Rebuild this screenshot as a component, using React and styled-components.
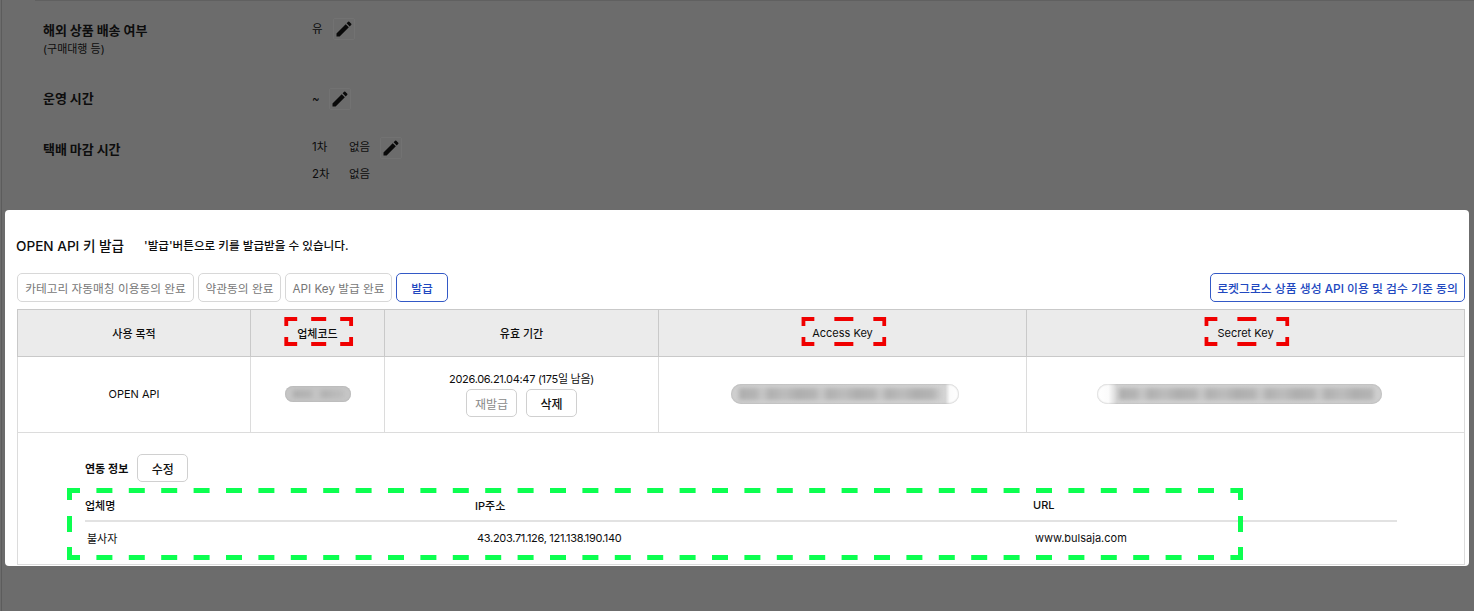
import React from "react";
import styled, { createGlobalStyle } from "styled-components";
import { MdEdit } from "react-icons/md";

const GlobalStyle = createGlobalStyle`
    html, body {
        margin: 0;
        padding: 0;
        background: #6c6c6c;
    }
    * {
        box-sizing: border-box;
    }
`

const RedDash = ({ width, mid }) => {
    const midStart = (width - mid) / 2
    return (
        <RedSvg width={width} height={29} viewBox={`0 0 ${width} 29`} fill="none" stroke="#f00000" strokeWidth="4">
            <path d={`M2 9V2H13M${midStart} 2H${midStart + mid}M${width - 13} 2H${width - 2}V9`} />
            <path d={`M2 20V27H13M${midStart} 27H${midStart + mid}M${width - 13} 27H${width - 2}V20`} />
        </RedSvg>
    )
}

const GreenDash = () => (
    <GreenSvg width={1176} height={72} viewBox="0 0 1176 72" fill="none" stroke="#0cff50" strokeWidth="5">
        <path d="M0 2.5H1176" strokeDasharray="16 16.4" strokeDashoffset="3" />
        <path d="M0 69.5H1176" strokeDasharray="16 16.4" strokeDashoffset="3" />
        <path d="M2.5 0V12M2.5 28V44M2.5 59V72" />
        <path d="M1173.5 0V12M1173.5 28V44M1173.5 59V72" />
    </GreenSvg>
)

const App = () => {
    return (
        <Page>
            <GlobalStyle />
            <Settings>
                <Row $height={69}>
                    <Label>
                        <LabelMain>해외 상품 배송 여부</LabelMain>
                        <LabelSub>(구매대행 등)</LabelSub>
                    </Label>
                    <Values>
                        <ValueLine $lift={1}>
                            유
                            <EditButton $drop={1}><MdEdit /></EditButton>
                        </ValueLine>
                    </Values>
                </Row>
                <Row $height={50}>
                    <Label $lift={1}>
                        <LabelMain>운영 시간</LabelMain>
                    </Label>
                    <Values $drop={1}>
                        <ValueLine>
                            ~
                            <EditButton $gap={9}><MdEdit /></EditButton>
                        </ValueLine>
                    </Values>
                </Row>
                <Row $height={74}>
                    <Label>
                        <LabelMain>택배 마감 시간</LabelMain>
                    </Label>
                    <Values>
                        <ValueLine $lift={2}>
                            <Round>1차</Round>
                            없음
                            <EditButton $drop={2}><MdEdit /></EditButton>
                        </ValueLine>
                        <ValueLine>
                            <Round>2차</Round>
                            없음
                        </ValueLine>
                    </Values>
                </Row>
            </Settings>

            <Panel>
                <TitleRow>
                    <Title>OPEN API 키 발급</Title>
                    <Guide>'발급'버튼으로 키를 발급받을 수 있습니다.</Guide>
                </TitleRow>

                <Toolbar>
                    <Button $width={177}>카테고리 자동매칭 이용동의 완료</Button>
                    <Button $width={83}>약관동의 완료</Button>
                    <Button $width={107}>API Key 발급 완료</Button>
                    <Button $primary $width={52}>발급</Button>
                    <RightButton $primary $width={255}>로켓그로스 상품 생성 API 이용 및 검수 기준 동의</RightButton>
                </Toolbar>

                <KeyTable>
                    <HeadCell>사용 목적</HeadCell>
                    <HeadCell>업체코드<RedDash width={69} mid={15} /></HeadCell>
                    <HeadCell>유효 기간</HeadCell>
                    <HeadCell $latin>Access Key<RedDash width={85} mid={19} /></HeadCell>
                    <HeadCell $latin $last>Secret Key<RedDash width={85} mid={19} /></HeadCell>

                    <Cell $lift>OPEN API</Cell>
                    <Cell><Masked $width={66} $height={16} /></Cell>
                    <Cell>
                        <Expiry>
                            <Digits>2026.06.21.04:47 (175일 남음)</Digits>
                            <ExpiryButtons>
                                <SmallButton $muted>재발급</SmallButton>
                                <SmallButton>삭제</SmallButton>
                            </ExpiryButtons>
                        </Expiry>
                    </Cell>
                    <Cell><Masked $width={228} $height={20} $fade="right" $nudge={5} /></Cell>
                    <Cell $last><Masked $width={285} $height={20} $fade="left" $nudge={-13} /></Cell>

                    <Detail>
                        <DetailHead>
                            연동 정보
                            <SmallButton>수정</SmallButton>
                        </DetailHead>
                        <InfoHead>
                            <span>업체명</span>
                            <span>IP주소</span>
                            <span>URL</span>
                        </InfoHead>
                        <InfoRow>
                            <span>불사자</span>
                            <Digits>43.203.71.126, 121.138.190.140</Digits>
                            <span>www.bulsaja.com</span>
                        </InfoRow>
                        <GreenDash />
                    </Detail>
                </KeyTable>
            </Panel>
        </Page>
    );
}

const Page = styled.div`
    position: relative;
    width: 1474px;
    height: 611px;
    overflow: hidden;
    background: #6c6c6c;
    color: #0d0d0d;
    font-family: Inter, "Noto Sans CJK KR", sans-serif;
    font-size: 12px;

    &::before {
        content: "";
        position: absolute;
        top: 0;
        bottom: 0;
        left: 1px;
        width: 1px;
        background: #5c5c5c;
    }
`

const Settings = styled.section`
    position: relative;
    height: 210px;
    padding: 18px 0 0 43px;

    &::before {
        content: "";
        position: absolute;
        top: 0;
        left: 35px;
        right: 0;
        height: 1px;
        background: #606060;
    }
`

const Row = styled.div`
    display: grid;
    grid-template-columns: 269px auto;
    height: ${props => props.$height}px;
`

const Label = styled.div`
    display: flex;
    flex-direction: column;
    margin-top: ${props => props.$lift ? -props.$lift : 0}px;
`

const LabelMain = styled.span`
    font-size: 13px;
    font-weight: 700;
    line-height: 24px;
    letter-spacing: -0.05px;
`

const LabelSub = styled.span`
    font-size: 11px;
    line-height: 13px;
    margin-top: 1px;
`

const Values = styled.div`
    display: flex;
    flex-direction: column;
    gap: 5px;
    margin-top: ${props => props.$drop || 0}px;
`

const ValueLine = styled.div`
    display: flex;
    align-items: center;
    height: 22px;
    margin-top: ${props => props.$lift ? -props.$lift : 0}px;
    font-size: 11.5px;
`

const Round = styled.span`
    width: 37px;
`

const EditButton = styled.span`
    display: inline-flex;
    align-items: center;
    justify-content: center;
    width: 22px;
    height: 22px;
    margin-left: ${props => props.$gap || 10}px;
    margin-top: ${props => (props.$drop || 0) * 2}px;
    border: 1px solid #727272;
    border-radius: 2px;
    font-size: 20px;
    color: #0a0a0a;
`

const Panel = styled.section`
    width: 1464px;
    height: 356px;
    margin-left: 5px;
    padding: 0 4px 0 12px;
    background: #fff;
    border-radius: 4px;
`

const TitleRow = styled.div`
    display: flex;
    align-items: center;
    height: 63px;
    padding-top: 7px;
`

const Title = styled.h2`
    margin: 0 0 0 -1px;
    width: 128px;
    font-size: 13.6px;
    font-weight: 500;
`

const Guide = styled.p`
    margin: 0;
    font-size: 11.6px;
    font-weight: 500;
`

const Toolbar = styled.div`
    display: flex;
    gap: 4px;
    height: 29px;
`

const Button = styled.button`
    height: 29px;
    width: ${props => props.$width}px;
    padding: 0;
    background: #fff;
    border: 1px solid ${props => props.$primary ? "#3359c6" : "#d8d8d8"};
    border-radius: 5px;
    color: ${props => props.$primary ? "#2148c0" : "#777"};
    font-family: inherit;
    font-size: 11.7px;
    font-weight: ${props => props.$primary ? 500 : 400};
    white-space: nowrap;
`

const RightButton = styled(Button)`
    margin-left: auto;
    font-size: 11.85px;
`

const KeyTable = styled.div`
    display: grid;
    grid-template-columns: 233px 134px 274px 368px 439px;
    grid-template-rows: 48px 76px 132px;
    width: 1448px;
    margin-top: 7px;
`

const HeadCell = styled.div`
    position: relative;
    display: flex;
    align-items: center;
    justify-content: center;
    padding-bottom: 1px;
    background: #ebebeb;
    border: 1px solid #c9c9c9;
    border-width: 1px 0 1px 1px;
    border-right-width: ${props => props.$last ? "1px" : 0};
    font-weight: ${props => props.$latin ? 400 : 500};
    font-size: 11px;
`

const Cell = styled.div`
    display: flex;
    align-items: center;
    justify-content: center;
    padding-bottom: ${props => props.$lift ? "1px" : 0};
    border-left: 1px solid #dcdcdc;
    border-right: ${props => props.$last ? "1px solid #dcdcdc" : "none"};
    border-bottom: 1px solid #dcdcdc;
    font-size: 11px;
`

const RedSvg = styled.svg`
    position: absolute;
    top: 7px;
    left: 50%;
    transform: translateX(-49%);
`

const GreenSvg = styled.svg`
    position: absolute;
    top: 55px;
    left: 49px;
`

const Masked = styled.div`
    position: relative;
    width: ${props => props.$width}px;
    height: ${props => props.$height}px;
    margin-left: ${props => props.$nudge || 0}px;
    margin-bottom: 1px;
    overflow: hidden;
    border-radius: ${props => props.$height / 2}px;
    background: ${props => props.$fade === "right"
        ? "linear-gradient(90deg, #cfcfcf 0, #d4d4d4 94%, #fbfbfb 96%, #fff 100%)"
        : props.$fade === "left"
            ? "linear-gradient(90deg, #fff 0, #fbfbfb 4%, #d4d4d4 7%, #cfcfcf 100%)"
            : "#c6c6c6"};
    box-shadow: inset 0 0 2px #a8a8a8;

    &::before {
        content: "";
        position: absolute;
        top: 4px;
        bottom: 4px;
        left: ${props => props.$fade === "left" ? "22px" : "8px"};
        right: ${props => props.$fade === "right" ? "18px" : "8px"};
        background: repeating-linear-gradient(90deg, #aeaeae 0, #b4b4b4 17px, #c8c8c8 23px, #b0b0b0 31px, #bcbcbc 46px, #aeaeae 59px);
        filter: blur(2px);
    }
`

const Expiry = styled.div`
    display: flex;
    flex-direction: column;
    align-items: center;
    gap: 2px;
    line-height: 15px;
`

const Digits = styled.span`
    letter-spacing: -0.3px;
`

const ExpiryButtons = styled.div`
    display: flex;
    gap: 9px;
`

const SmallButton = styled.button`
    width: 51px;
    height: 28px;
    padding: 0;
    background: #fff;
    border: 1px solid #d0d0d0;
    border-radius: 5px;
    color: ${props => props.$muted ? "#8a8a8a" : "#111"};
    font-family: inherit;
    font-size: 12px;
    font-weight: ${props => props.$muted ? 400 : 500};
`

const Detail = styled.div`
    position: relative;
    grid-column: 1 / -1;
    padding: 21px 67px 0;
    border: 1px solid #dcdcdc;
    border-top: none;
`

const DetailHead = styled.div`
    display: flex;
    align-items: center;
    gap: 9px;
    height: 28px;
    font-size: 11px;
    font-weight: 600;
`

const InfoHead = styled.div`
    display: grid;
    grid-template-columns: 390px 558px 1fr;
    align-items: center;
    height: 40px;
    padding-top: 8px;
    border-bottom: 2px solid #e2e2e2;
    font-size: 11px;
    font-weight: 500;
`

const InfoRow = styled.div`
    display: grid;
    grid-template-columns: 390px 558px 1fr;
    align-items: center;
    height: 31px;
    padding-left: 2px;
    font-size: 11px;
`

export default App;
